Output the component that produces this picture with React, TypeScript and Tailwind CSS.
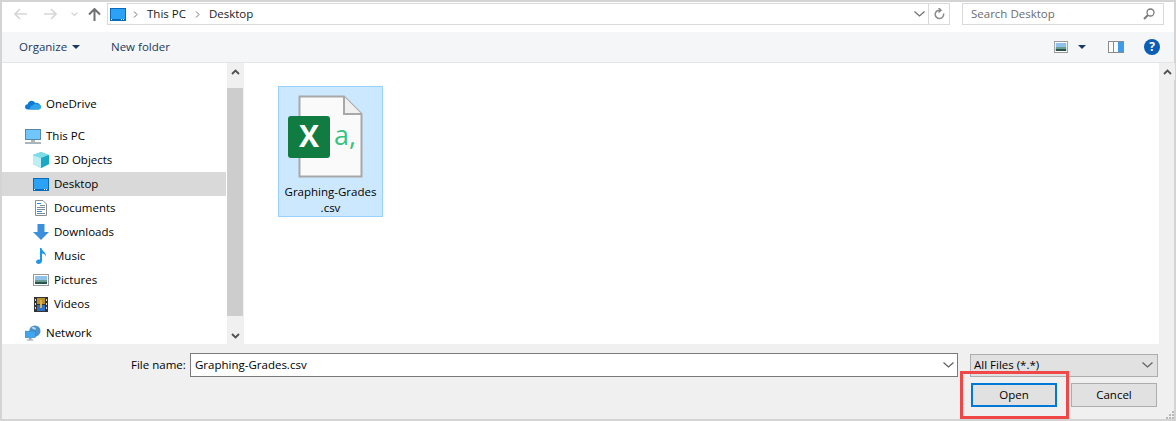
import type { ReactNode } from 'react';

const DesktopIcon = ({ className = '' }: { className?: string }) => (
  <svg className={className} width="16" height="13" viewBox="0 0 16 13">
    <rect x="0" y="0" width="16" height="13" fill="#0a6cb8" />
    <rect x="1" y="1" width="14" height="10" fill="#2ba2f5" />
    <rect x="11" y="11" width="1" height="1" fill="#fff" />
    <rect x="13" y="11" width="1" height="1" fill="#fff" />
    <rect x="1" y="11" width="1" height="1" fill="#fff" />
  </svg>
);

const PictureIcon = ({ w = 16 }: { w?: number }) => (
  <svg width={w} height="12" viewBox="0 0 16 12" preserveAspectRatio="none">
    <rect x="0.5" y="0.5" width="15" height="11" fill="#fff" stroke="#9a9a9a" />
    <rect x="2" y="2" width="12" height="4" fill="#8ec2ea" />
    <rect x="2" y="6" width="12" height="2" fill="#6d9c94" />
    <rect x="2" y="8" width="12" height="2" fill="#27554c" />
  </svg>
);

const icons: Record<string, ReactNode> = {
  OneDrive: (
    <svg width="16" height="11" viewBox="0 0 16 11">
      <path d="M3 10.5C1 10.5 0 9.2 0 7.8 0 6.3 1.2 5.3 2.6 5.2 3.2 3 4.8 1.8 6.6 1.8c1.5 0 2.7.8 3.4 2C12.8 3.3 15 4.800 16 7.500 16 9.200 14.800 10.500 13 10.500Z" fill="#0f78d4" />
      <path d="M6 10.500H13.500C15 10.500 16 9.300 16 8 16 6.700 14.800 5.500 13.300 5.600 11.500 3.800 9 4.500 8 6.300 6.500 6.300 5 7.500 5.200 9 5.300 9.700 5.600 10.200 6 10.500Z" fill="#2fa4e8" />
    </svg>
  ),
  'This PC': (
    <svg width="16" height="15" viewBox="0 0 16 15">
      <rect x="0.5" y="0.5" width="15" height="10" fill="#6fc6fb" stroke="#5b87a8" />
      <rect x="6" y="11" width="4" height="2" fill="#a9b6c0" />
      <rect x="0" y="13" width="16" height="2" fill="#a9b4bc" />
    </svg>
  ),
  '3D Objects': (
    <svg width="16" height="16" viewBox="0 0 16 16">
      <path d="M8 0 16 3V12L8 16 0 12V3Z" fill="#45c5d6" />
      <path d="M0 3 8 6V16L0 12Z" fill="#bdeef3" />
      <path d="M8 0 16 3 8 6 0 3Z" fill="#7fdde8" />
      <path d="M8 6 16 3V12L8 16Z" fill="#1ca7c2" />
    </svg>
  ),
  Desktop: <DesktopIcon />,
  Documents: (
    <svg width="12" height="16" viewBox="0 0 12 16">
      <path d="M.5.500H8L11.500 4V15.500H.5Z" fill="#fff" stroke="#8d8d8d" />
      <rect x="2" y="3" width="4" height="1" fill="#2b8adf" />
      <rect x="5" y="5" width="5" height="1" fill="#7a8a9a" />
      <rect x="2" y="7" width="8" height="1" fill="#7a8a9a" />
      <rect x="2" y="9" width="8" height="1" fill="#7a8a9a" />
      <rect x="2" y="11" width="5" height="1" fill="#2b8adf" />
      <rect x="2" y="13" width="8" height="1" fill="#7a8a9a" />
    </svg>
  ),
  Downloads: (
    <svg width="16" height="16" viewBox="0 0 16 16">
      <path d="M4.500 0H11.500V8H16L8 16 0 8H4.500Z" fill="#3c8fdc" />
    </svg>
  ),
  Music: (
    <svg width="11" height="16" viewBox="0 0 11 16">
      <path d="M4 0H5.500C6 3 10.500 4.500 10 9 9.800 7 8 5.800 6 5.500V13C6 15 4 16 2.500 16 1 16 0 15 0 13.800 0 12.300 1.800 11 4 11.500Z" fill="#1e96ea" />
    </svg>
  ),
  Pictures: <PictureIcon />,
  Videos: (
    <svg width="14" height="15" viewBox="0 0 14 15">
      <rect width="14" height="15" fill="#333" />
      <rect x="3" y="1" width="8" height="6" fill="#b9902c" />
      <rect x="3" y="8" width="8" height="6" fill="#2f6fc4" />
      <rect x="6" y="3" width="2" height="8" fill="#d8b24a" />
      <rect x="1" y="2" width="1" height="2" fill="#ddd" />
      <rect x="1" y="6" width="1" height="2" fill="#ddd" />
      <rect x="1" y="10" width="1" height="2" fill="#ddd" />
      <rect x="12" y="2" width="1" height="2" fill="#ddd" />
      <rect x="12" y="6" width="1" height="2" fill="#ddd" />
      <rect x="12" y="10" width="1" height="2" fill="#ddd" />
    </svg>
  ),
  Network: (
    <svg width="17" height="16" viewBox="0 0 17 16">
      <circle cx="10.500" cy="6" r="6" fill="#4d93c9" />
      <path d="M7 2C9 1 11 2 12 4 10 5 8 4 7 2Z" fill="#b9dcf2" />
      <rect x="0" y="6" width="11" height="7" fill="#3fa7ef" stroke="#2a7cb8" strokeWidth="0.5" />
      <rect x="4" y="13" width="3" height="2" fill="#8ca3b5" />
      <rect x="2" y="15" width="7" height="1" fill="#8ca3b5" />
    </svg>
  ),
};

const NavRow = ({ label, child, selected }: { label: string; child?: boolean; selected?: boolean }) => (
  <div className={`flex h-6 shrink-0 items-center ${child ? 'pl-[31px]' : 'pl-[23px]'} ${selected ? 'bg-[#d9d9d9]' : ''}`}>
    <span className="flex w-4 shrink-0 items-center justify-center">{icons[label]}</span>
    <span className="ml-[5px] text-black">{label}</span>
  </div>
);

const ScrollBar = () => (
  <div className="flex w-[16px] shrink-0 flex-col bg-[#f0f0f0]">
    <div className="flex h-[17px] shrink-0 items-center justify-center">
      <svg width="9" height="6" viewBox="0 0 9 6"><path d="M1 5 4.500 1.500 8 5" fill="none" stroke="#505050" strokeWidth="1.800" /></svg>
    </div>
  </div>
);

const Chevron = ({ color = '#606060' }: { color?: string }) => (
  <svg width="11" height="6" viewBox="0 0 11 6"><path d="M.5.500 5.500 5 10.500.500" fill="none" stroke={color} strokeWidth="1.200" /></svg>
);

const Caret = () => (
  <svg width="8" height="4" viewBox="0 0 8 4"><path d="M0 0H8L4 4Z" fill="#1c3a5e" /></svg>
);

export default function App() {
  return (
    <div
      className="relative flex h-[421px] w-[1176px] flex-col border-2 border-[#d4d4d4] bg-white text-[11.5px] leading-4"
      style={{ fontFamily: '"Open Sans", "Liberation Sans", sans-serif' }}
    >
      {/* nav bar */}
      <div className="flex h-[30px] shrink-0 items-start pt-px">
        <div className="flex h-[22px] w-[105px] shrink-0 items-center pl-3">
          <svg width="13" height="12" viewBox="0 0 13 12"><path d="M6 1 1 6 6 11M1 6H13" fill="none" stroke="#d6d6d6" strokeWidth="1.600" /></svg>
          <svg className="ml-[17px]" width="13" height="12" viewBox="0 0 13 12"><path d="M7 1 12 6 7 11M12 6H0" fill="none" stroke="#d6d6d6" strokeWidth="1.600" /></svg>
          <svg className="ml-[14px]" width="7" height="4" viewBox="0 0 7 4"><path d="M.5.500 3.500 3.500 6.500.500" fill="none" stroke="#d6d6d6" strokeWidth="1.200" /></svg>
          <svg className="ml-[10px]" width="13" height="13" viewBox="0 0 13 13"><path d="M1 6.500 6.500 1 12 6.500M6.500 1V13" fill="none" stroke="#707070" strokeWidth="2" /></svg>
        </div>
        <div className="flex h-[22px] w-[843px] shrink-0 items-center border border-[#d9d9d9]">
          <DesktopIcon className="ml-[2px]" />
          <svg className="ml-[7px]" width="5" height="7" viewBox="0 0 5 7"><path d="M1 .5 4 3.500 1 6.500" fill="none" stroke="#707070" /></svg>
          <span className="ml-[9px] text-[#1a1a1a]">This PC</span>
          <svg className="ml-[9px]" width="5" height="7" viewBox="0 0 5 7"><path d="M1 .5 4 3.500 1 6.500" fill="none" stroke="#707070" /></svg>
          <span className="ml-[9px] text-[#1a1a1a]">Desktop</span>
          <span className="ml-auto mr-[3px]"><Chevron color="#707070" /></span>
          <span className="flex h-full w-[21px] items-center justify-center border-l border-[#d9d9d9]">
            <svg width="11" height="12" viewBox="0 0 11 12"><path d="M9.500 5.500A4.200 4.200 0 1 1 6 2.200M4.500 0 7 2.200 4.500 4.500" fill="none" stroke="#8a8a8a" strokeWidth="1.500" /></svg>
          </span>
        </div>
        <div className="ml-[12px] flex h-[22px] w-[202px] shrink-0 items-center justify-between border border-[#d9d9d9] pl-2 pr-[8px] text-[#6d6d6d]">
          <span>Search Desktop</span>
          <svg width="12" height="12" viewBox="0 0 12 12"><circle cx="7.500" cy="4.500" r="3.500" fill="none" stroke="#7a7a7a" strokeWidth="1.300" /><path d="M5 7 1 11" stroke="#7a7a7a" strokeWidth="2" /></svg>
        </div>
      </div>

      {/* command bar */}
      <div className="flex h-[31px] shrink-0 items-center border-b border-[#e5e5e5] bg-[#f5f6f7] pl-[17px] text-[#1c3a5e]">
        <span className="w-[47px]">Organize</span>
        <span className="ml-[6px] flex"><Caret /></span>
        <span className="ml-[31px]">New folder</span>
        <span className="ml-auto flex"><PictureIcon w={14} /></span>
        <span className="ml-[10px] flex"><Caret /></span>
        <svg className="ml-[22px]" width="16" height="12" viewBox="0 0 16 12">
          <rect x="0.500" y="0.500" width="15" height="11" fill="#fff" stroke="#8a8a8a" />
          <rect x="5" y="1" width="1" height="10" fill="#8a8a8a" />
          <rect x="10" y="1" width="5" height="10" fill="#3f9be8" />
        </svg>
        <span className="ml-[20px] mr-[14px] flex h-4 w-4 items-center justify-center rounded-full bg-[#0a5fb4] text-[12px] font-bold text-white">?</span>
      </div>

      {/* body */}
      <div className="flex min-h-0 flex-1">
        <div className="flex w-[224px] shrink-0 flex-col overflow-hidden pt-[29px]">
          <NavRow label="OneDrive" />
          <div className="h-2 shrink-0" />
          <NavRow label="This PC" />
          <NavRow label="3D Objects" child />
          <NavRow label="Desktop" child selected />
          <NavRow label="Documents" child />
          <NavRow label="Downloads" child />
          <NavRow label="Music" child />
          <NavRow label="Pictures" child />
          <NavRow label="Videos" child />
          <div className="h-[5px] shrink-0" />
          <NavRow label="Network" />
        </div>
        <div className="ml-px flex w-[16px] shrink-0 flex-col bg-[#f0f0f0]">
          <ScrollBar />
          <div className="mt-[8px] h-[228px] w-[16px] shrink-0 bg-[#cdcdcd]" />
          <div className="mt-auto flex h-[17px] shrink-0 items-center justify-center">
            <svg width="9" height="6" viewBox="0 0 9 6"><path d="M1 1 4.500 4.500 8 1" fill="none" stroke="#505050" strokeWidth="1.800" /></svg>
          </div>
        </div>
        <div className="min-w-0 flex-1 border-l border-[#f0f0f0] pl-[34px] pt-[23px]">
          <div className="flex h-[131px] w-[105px] flex-col items-center border border-[#99d1ff] bg-[#cce8ff] pt-2">
            <svg width="84" height="84" viewBox="0 0 84 84" className="ml-[-1px]">
              <path d="M11.500 1.500H56L73.500 19V81.500H11.500Z" fill="#fafafa" stroke="#a8a8a8" strokeWidth="2" />
              <path d="M56 1.500V19H73.500" fill="#f0f0f0" stroke="#a8a8a8" strokeWidth="2" />
              <rect x="0" y="21" width="42" height="42" rx="3" fill="#107c41" />
              <text x="21" y="52" textAnchor="middle" fontSize="30" fontWeight="700" fill="#fff" fontFamily="Open Sans, sans-serif">X</text>
              <text x="46" y="50" fontSize="27" fill="#33c481" fontFamily="Open Sans, sans-serif">a,</text>
            </svg>
            <span className="mt-[5px] w-full text-center text-black">Graphing-Grades<br />.csv</span>
          </div>
        </div>
        <div className="flex w-[15px] shrink-0 flex-col bg-[#f0f0f0]">
          <ScrollBar />
        </div>
      </div>

      {/* file name and buttons */}
      <div className="flex h-[75px] shrink-0 flex-col bg-[#f0f0f0] pt-[9px]">
        <div className="flex h-[24px] items-center pl-[129px]">
          <span className="w-[53px] whitespace-nowrap text-black">File name:</span>
          <div className="ml-[6px] flex h-[24px] w-[768px] items-center justify-between border border-[#7a7a7a] bg-white pl-[4px] pr-[3px] text-black">
            <span>Graphing-Grades.csv</span>
            <Chevron />
          </div>
          <div className="ml-[12px] flex h-[23px] w-[188px] items-center justify-between border border-[#adadad] bg-[#e1e1e1] pl-[3px] pr-[4px] text-black">
            <span>All Files (*.*)</span>
            <Chevron />
          </div>
        </div>
        <div className="mt-[6px] flex justify-end pr-[17px]">
          <button className="flex h-[24px] w-[86px] items-center justify-center border-2 border-[#0078d7] bg-[#e1e1e1] text-black">Open</button>
          <button className="ml-[14px] flex h-[24px] w-[86px] items-center justify-center border border-[#adadad] bg-[#e1e1e1] text-black">Cancel</button>
        </div>
      </div>

      {/* resize grip */}
      <svg className="absolute bottom-0 right-0" width="8" height="9" viewBox="0 0 8 9">
        <rect x="6" y="1" width="2" height="2" fill="#b8b8b8" />
        <rect x="3" y="4" width="2" height="2" fill="#b8b8b8" />
        <rect x="6" y="4" width="2" height="2" fill="#b8b8b8" />
        <rect x="0" y="7" width="2" height="2" fill="#b8b8b8" />
        <rect x="3" y="7" width="2" height="2" fill="#b8b8b8" />
        <rect x="6" y="7" width="2" height="2" fill="#b8b8b8" />
      </svg>

      {/* red annotation */}
      <div className="absolute left-[958px] top-[369px] h-[48px] w-[109px] border-[3px] border-[#f04848]" />
    </div>
  );
}
